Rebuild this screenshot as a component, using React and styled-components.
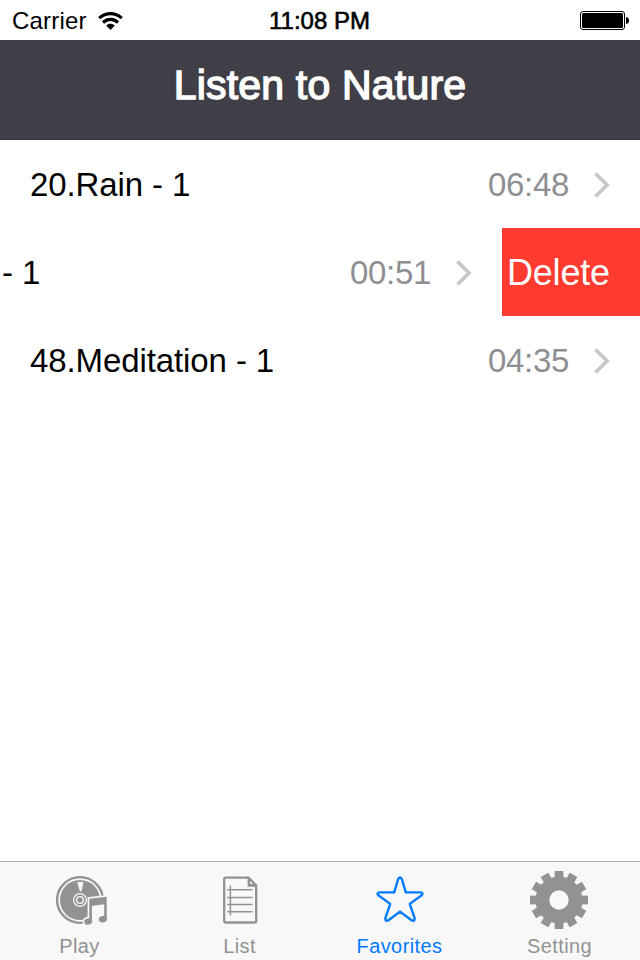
import React, { useState } from 'react'
import styled, { createGlobalStyle } from "styled-components";

//color
const COLOR = {
  header: "#403f47",
  headerLine: "#35343c",
  red: "#ff3b30",
  blue: "#007aff",
  gray: "#929292",
  time: "#8e8e93",
  arrow: "#c7c7cc",
  tabBar: "#f8f8f8",
  tabLine: "#adadad",
}

const trackList = [
  { id: 20, title: "20.Rain - 1", time: "06:48" },
  { id: 34, title: "- 1", time: "00:51", isSwiped: true },
  { id: 48, title: "48.Meditation - 1", time: "04:35" },
]

const WifiIcon = () => (
  <svg width="26" height="20" viewBox="0 0 26 20" fill="none" stroke="#000" strokeWidth="3.2">
    <path d="M1.2 7.1 C8 1 17 1 23.8 7.1" />
    <path d="M5 11.5 C9.5 7.4 15.5 7.4 20 11.5" />
    <path d="M8.2 14.6 C10.6 12.2 14.4 12.2 16.8 14.6 L12.5 19 Z" fill="#000" stroke="none" />
  </svg>
)

const BatteryIcon = () => (
  <svg width="50" height="20" viewBox="0 0 50 20">
    <rect x="0.5" y="0.5" width="44" height="18" rx="2.5" fill="#fff" stroke="#000" />
    <rect x="2" y="2" width="41" height="15" rx="1.5" />
    <path d="M46 6 C48.5 6.3 49 7.8 49 9.5 C49 11.2 48.5 12.7 46 13 Z" />
  </svg>
)

const ArrowIcon = () => (
  <svg width="16" height="26" viewBox="0 0 16 26" fill="none" stroke={COLOR.arrow} strokeWidth="3.8">
    <path d="M1.5 1.5 L13 13 L1.5 24.5" />
  </svg>
)

const PlayIcon = () => (
  <svg width="60" height="60" viewBox="0 0 60 60">
    <circle cx="30" cy="30" r="22.9" fill="none" stroke="currentColor" strokeWidth="2.4" />
    <circle cx="30" cy="30" r="20" fill="currentColor" />
    <path d="M27.3 12.2 Q30.5 11.4 33.4 12.2 L31.6 21.2 H29.8 Z" fill={COLOR.tabBar} />
    <circle cx="30" cy="30" r="7" fill={COLOR.tabBar} />
    <circle cx="30" cy="30" r="5.8" fill="currentColor" />
    <circle cx="30" cy="30" r="4.1" fill={COLOR.tabBar} />
    <circle cx="30" cy="30" r="2.7" fill="currentColor" />
    {/*음표*/}
    <g fill={COLOR.tabBar} stroke={COLOR.tabBar} strokeWidth="3.4">
      <path d="M39.3 28.7 L56.7 26.8 V49 L43 50 L39.3 53 Z" />
      <ellipse cx="38.3" cy="51.6" rx="4.1" ry="3.2" />
    </g>
    <path d="M39.3 28.7 L56.7 26.8 V49 H54.2 V34.2 L41.9 35.9 V51.4 H39.3 Z" fill="currentColor" />
    <ellipse cx="38.2" cy="51.5" rx="4.1" ry="3.2" transform="rotate(-15 38.2 51.5)" fill="currentColor" />
    <ellipse cx="52.9" cy="49.2" rx="4.1" ry="3.2" transform="rotate(-15 52.9 49.2)" fill="currentColor" />
  </svg>
)

const ListIcon = () => (
  <svg width="60" height="60" viewBox="0 0 60 60" fill="none" stroke="currentColor">
    <path d="M15 7.7 H38.5 L46.2 15.5 V51 Q46.2 52.5 44.7 52.5 H15.6 Q14.2 52.5 14.2 51 V9 Q14.2 7.7 15.6 7.7 Z" strokeWidth="2.3" />
    <path d="M38.9 8 V15.4 H46" strokeWidth="2.6" />
    <path d="M20.4 15.5 V45.5 M17.2 19.8 H42.6 M17.2 27.4 H42.6 M17.2 34.6 H42.6 M17.2 41.7 H42.6" strokeWidth="1.5" />
  </svg>
)

const StarIcon = () => (
  <svg width="60" height="60" viewBox="0 0 60 60" fill="none" stroke="currentColor" strokeWidth="2.4" strokeLinejoin="round">
    <path d="M28.3 8.7 Q30 6.4 31.7 8.7 L35.8 22.3 L50.6 22.4 Q53.8 23.3 51.7 25.2 L39.8 33.9 L44.7 48.3 Q44.7 51.6 41.9 50.5 L30 41.6 L18.1 50.5 Q15.3 51.6 15.3 48.3 L20.2 33.9 L8.3 25.2 Q6.2 23.3 9.4 22.4 L24.2 22.3 Z" />
  </svg>
)

const SettingIcon = () => (
  <svg width="60" height="60" viewBox="0 0 60 60">
    <g transform="translate(-1 0)">
      <circle cx="30" cy="30" r="16.6" fill="none" stroke="currentColor" strokeWidth="13.8" />
      {Array.from({ length: 12 }, (_, i) => (
        <rect key={i} x="25.6" y="1" width="8.8" height="9" fill="currentColor" transform={`rotate(${i * 30} 30 30)`} />
      ))}
    </g>
  </svg>
)

const tabList = [
  { name: "Play", icon: <PlayIcon /> },
  { name: "List", icon: <ListIcon /> },
  { name: "Favorites", icon: <StarIcon /> },
  { name: "Setting", icon: <SettingIcon /> },
]

const TrackItem = ({ title, time, isSwiped, onClickDelete }) => {
  return (
    <StTrackItem>
      <StTrackContent $isSwiped={isSwiped}>
        <StTrackTitle>{title}</StTrackTitle>
        <StTrackTime>{time}</StTrackTime>
        <ArrowIcon />
      </StTrackContent>
      {isSwiped && <StDeleteButton onClick={onClickDelete}>Delete</StDeleteButton>}
    </StTrackItem>
  )
}

const App = () => {
  const [tracks, setTracks] = useState(trackList)
  const [activeTab, setActiveTab] = useState("Favorites")

  const onClickDelete = (id) => {
    setTracks(tracks.filter((track) => track.id !== id))
  }

  return (
    <>
      <GlobalStyle />
      <StScreen>
        <StStatusBar>
          <StCarrier>
            <span>Carrier</span>
            <WifiIcon />
          </StCarrier>
          <StClock>11:08 PM</StClock>
          <StBattery>
            <BatteryIcon />
          </StBattery>
        </StStatusBar>

        <StHeader>
          <StHeaderTitle>Listen to Nature</StHeaderTitle>
        </StHeader>

        <StTrackList>
          {tracks.map((track) => (
            <TrackItem key={track.id} {...track} onClickDelete={() => onClickDelete(track.id)} />
          ))}
        </StTrackList>

        <StTabBar>
          {tabList.map((tab) => (
            <StTabButton
              key={tab.name}
              $isActive={tab.name === activeTab}
              onClick={() => setActiveTab(tab.name)}
            >
              {tab.icon}
              <StTabLabel>{tab.name}</StTabLabel>
            </StTabButton>
          ))}
        </StTabBar>
      </StScreen>
    </>
  )
}

const GlobalStyle = createGlobalStyle`
  * {
    box-sizing: border-box;
  }
  body {
    margin: 0;
    background-color: #fff;
    font-family: "Liberation Sans", Arial, sans-serif;
  }
  button {
    border: none;
    padding: 0;
    font-family: inherit;
    cursor: pointer;
  }
  svg {
    display: block;
    flex-shrink: 0;
  }
`

const StScreen = styled.div`
  display: flex;
  flex-direction: column;
  width: 640px;
  height: 960px;
  overflow: hidden;
`

const StStatusBar = styled.div`
  display: grid;
  grid-template-columns: 1fr auto 1fr;
  align-items: center;
  height: 40px;
  padding: 1px 10px 0 12px;
  font-size: 24px;
  line-height: 40px;
`

const StCarrier = styled.div`
  display: flex;
  align-items: center;
  column-gap: 11px;
  letter-spacing: 0.2px;
`

const StClock = styled.div`
  margin-right: 3px;
  letter-spacing: 0;
  -webkit-text-stroke: 0.6px #000;
`

const StBattery = styled.div`
  display: flex;
  justify-content: flex-end;
`

const StHeader = styled.header`
  display: flex;
  justify-content: center;
  height: 100px;
  background-color: ${COLOR.header};
  border-bottom: 1px solid ${COLOR.headerLine};
`

const StHeaderTitle = styled.h1`
  margin: 0;
  color: #fff;
  font-size: 41px;
  font-weight: 400;
  line-height: 90px;
  letter-spacing: 0.2px;
  -webkit-text-stroke: 1.4px #fff;
`

const StTrackList = styled.ul`
  flex: 1;
  margin: 0;
  padding: 0;
  list-style: none;
`

const StTrackItem = styled.li`
  display: flex;
  height: 88px;
`

const StTrackContent = styled.div`
  flex: 1;
  display: flex;
  align-items: center;
  padding: 2px 30px 0 ${(props) => (props.$isSwiped ? "2px" : "30px")};
  font-size: 33px;
`

const StTrackTitle = styled.span`
  flex: 1;
  color: #000;
  letter-spacing: -0.1px;
`

const StTrackTime = styled.span`
  margin-right: 25px;
  color: ${COLOR.time};
  letter-spacing: -0.3px;
`

const StDeleteButton = styled.button`
  width: 138px;
  padding: 1px 0 0 5px;
  background-color: ${COLOR.red};
  color: #fff;
  font-size: 36px;
  letter-spacing: -0.2px;
  text-align: left;
`

const StTabBar = styled.nav`
  display: grid;
  grid-template-columns: repeat(4, 1fr);
  height: 99px;
  border-top: 1px solid ${COLOR.tabLine};
  background-color: ${COLOR.tabBar};
`

const StTabButton = styled.button`
  display: flex;
  flex-direction: column;
  align-items: center;
  padding-top: 8px;
  background-color: transparent;
  color: ${(props) => (props.$isActive ? COLOR.blue : COLOR.gray)};
`

const StTabLabel = styled.span`
  margin: 4px 1px 0 0;
  font-size: 20px;
  line-height: 24px;
  letter-spacing: 0.4px;
`

export default App
